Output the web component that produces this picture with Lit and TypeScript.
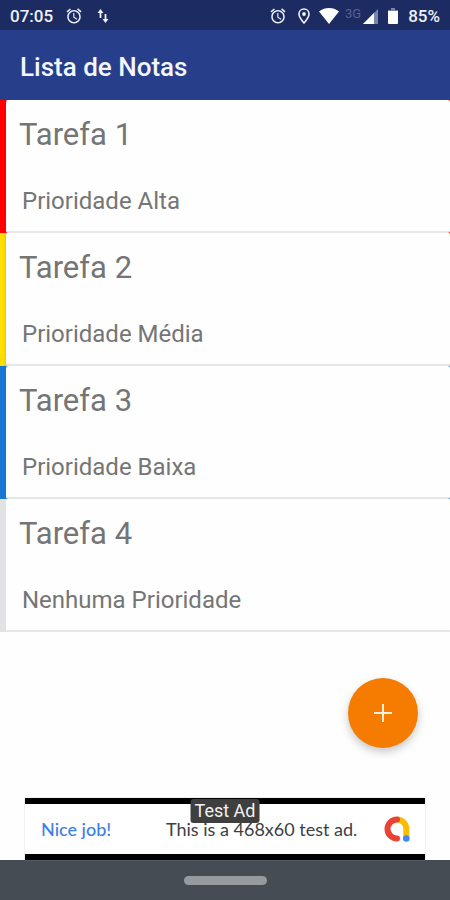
import { LitElement, html, css, svg } from "lit";
import { customElement, property } from "lit/decorators.js";

const alarmIcon = svg`<svg class="icon" width="18" height="18" viewBox="0 0 24 24" fill="currentColor" aria-hidden="true">
  <path d="M22 5.700l-4.600-3.900-1.300 1.500 4.600 3.900L22 5.700zM7.900 3.400L6.600 1.900 2 5.700l1.300 1.500 4.600-3.800zM12.500 8H11v6l4.700 2.900.8-1.200-4-2.400V8zM12 4c-5 0-9 4-9 9s4 9 9 9 9-4 9-9-4-9-9-9zm0 16c-3.900 0-7-3.100-7-7s3.100-7 7-7 7 3.100 7 7-3.100 7-7 7z"/>
</svg>`;

@customElement("status-bar")
export class StatusBar extends LitElement {
  static styles = css`
    :host {
      display: flex;
      align-items: center;
      height: 30px;
      padding: 2px 10px 0;
      box-sizing: border-box;
      background: #1c2b62;
      color: #eef1fa;
      font: 500 17px/20px Roboto, sans-serif;
    }
    .icon { display: block; flex: none; }
    .alarm { margin-left: 12px; }
    .data { margin-left: 14px; }
    .right { display: flex; align-items: center; margin-left: auto; }
    .pin { margin-left: 10px; }
    .wifi { margin-left: 8px; }
    .net {
      align-self: flex-start;
      margin-left: 6px;
      font: 400 13px/16px Roboto, sans-serif;
      color: #55628f;
    }
    .signal { margin-left: 2px; }
    .battery { margin-left: 10px; }
    .level { margin-left: 10px; }
  `;

  render() {
    return html`
      <span>07:05</span>
      <span class="alarm">${alarmIcon}</span>
      <svg class="icon data" width="12" height="16" viewBox="0 0 12 16" aria-hidden="true">
        <path d="M3.500 10V4M8.500 6v6" stroke="currentColor" stroke-width="1.800" fill="none"/>
        <path d="M0.500 5L3.500 1l3 4zM5.500 11l3 4 3-4z" fill="currentColor"/>
      </svg>
      <div class="right">
        ${alarmIcon}
        <svg class="icon pin" width="14" height="18" viewBox="0 0 14 18" aria-hidden="true">
          <path d="M7 2C4 2 2 4.200 2 7c0 3.400 5 9 5 9s5-5.600 5-9c0-2.800-2-5-5-5z" fill="none" stroke="currentColor" stroke-width="1.600"/>
          <circle cx="7" cy="7" r="1.900" fill="currentColor"/>
        </svg>
        <svg class="icon wifi" width="20" height="16" viewBox="0 0 20 16" fill="#fff" aria-hidden="true">
          <path d="M10 16L0 3.500C3 1 6.400 0 10 0s7 1 10 3.500z"/>
        </svg>
        <span class="net">3G</span>
        <svg class="icon signal" width="15" height="15" viewBox="0 0 15 15" aria-hidden="true">
          <path d="M15 0v15H0z" fill="#7a85ab"/>
          <path d="M11 4v11H0z" fill="#fff"/>
        </svg>
        <svg class="icon battery" width="10" height="16" viewBox="0 0 10 16" aria-hidden="true">
          <path d="M3 0h4v2h3v2H0V2h3z" fill="#7a85ab"/>
          <path d="M0 3h10v12a1 1 0 0 1-1 1H1a1 1 0 0 1-1-1z" fill="#fff"/>
        </svg>
        <span class="level">85%</span>
      </div>
    `;
  }
}

@customElement("note-card")
export class NoteCard extends LitElement {
  @property() heading = "";
  @property() priority = "";
  @property({ reflect: true }) level = "none";

  static styles = css`
    :host {
      display: block;
      padding-left: 6px;
      background: #e2e2e4;
    }
    :host([level="high"]) { background: #ff0000; }
    :host([level="medium"]) { background: linear-gradient(to right, #ffdf00 3px, #efcb00 6px); }
    :host([level="low"]) { background: #1976d2; }
    .card {
      box-sizing: border-box;
      min-height: 133px;
      padding: 15px 13px 14px;
      border-bottom: 2px solid #e6e6e6;
      border-radius: 2px;
      background: #fefefe;
      color: #757575;
      font-family: Roboto, sans-serif;
    }
    h2 { margin: 0; font-size: 31px; line-height: 40px; font-weight: 400; }
    p { margin: 30px 0 0 3px; font-size: 24px; line-height: 32px; }
  `;

  render() {
    return html`<article class="card"><h2>${this.heading}</h2><p>${this.priority}</p></article>`;
  }
}

@customElement("ad-banner")
export class AdBanner extends LitElement {
  static styles = css`
    :host {
      position: relative;
      display: flex;
      align-items: center;
      box-sizing: border-box;
      height: 62px;
      margin: 0 25px;
      padding: 0 14px 0 16px;
      border-top: 6px solid #000;
      border-bottom: 6px solid #000;
      background: #fff;
      box-shadow: 0 0 1px #aaa;
      font: 400 18px/24px Lato, sans-serif;
      color: #3c4043;
    }
    a { flex: 1 1 125px; color: #3f7de8; text-decoration: none; font-weight: 500; }
    .copy { flex: 1 1 217px; white-space: nowrap; }
    .logo { display: block; flex: none; }
    .tag {
      position: absolute;
      top: -5px;
      left: 50%;
      transform: translateX(-50%);
      padding: 0 4px;
      border-radius: 3px;
      background: #3f3f3f;
      color: #f2f2f2;
      font: 400 18px/24px Roboto, sans-serif;
      white-space: nowrap;
    }
  `;

  render() {
    return html`
      <a href="#">Nice job!</a>
      <span class="copy">This is a 468x60 test ad.</span>
      <svg class="logo" width="28" height="28" viewBox="0 0 28 28" fill="none" stroke-width="6" aria-hidden="true">
        <path d="M14 4.500a9.300 9.300 0 0 1 9.300 9.500V23" stroke="#fbbc04"/>
        <path d="M14 4.500a9.500 9.500 0 1 0 0 19" stroke="#ea4335" stroke-linecap="round"/>
        <circle cx="23.300" cy="23.500" r="3.300" fill="#4285f4"/>
      </svg>
      <span class="tag">Test Ad</span>
    `;
  }
}

const notes = [
  { heading: "Tarefa 1", priority: "Prioridade Alta", level: "high" },
  { heading: "Tarefa 2", priority: "Prioridade Média", level: "medium" },
  { heading: "Tarefa 3", priority: "Prioridade Baixa", level: "low" },
  { heading: "Tarefa 4", priority: "Nenhuma Prioridade", level: "none" },
];

@customElement("app-root")
export class AppRoot extends LitElement {
  static styles = css`
    :host {
      display: flex;
      flex-direction: column;
      min-height: 100vh;
      background: #fefefe;
      font-family: Roboto, sans-serif;
    }
    header {
      display: flex;
      align-items: center;
      box-sizing: border-box;
      height: 70px;
      padding: 4px 20px 0;
      background: #273e8a;
      color: #f4f6fc;
    }
    h1 { margin: 0; font-size: 26px; line-height: 32px; font-weight: 500; }
    main { position: relative; flex: 1; padding-bottom: 50px; }
    ul { margin: 0; padding: 0; list-style: none; }
    .fab {
      position: absolute;
      right: 32px;
      bottom: 50px;
      display: flex;
      align-items: center;
      justify-content: center;
      width: 70px;
      height: 70px;
      padding: 0;
      border: 0;
      border-radius: 50%;
      background: #f57c00;
      box-shadow: 0 4px 9px rgba(0, 0, 0, 0.22);
    }
    .nav {
      display: flex;
      align-items: center;
      justify-content: center;
      height: 40px;
      background: #454c53;
    }
    .home { width: 83px; height: 9px; padding: 0; border: 0; border-radius: 5px; background: #979b9f; }
  `;

  render() {
    return html`
      <status-bar></status-bar>
      <header><h1>Lista de Notas</h1></header>
      <main>
        <ul>
          ${notes.map((n) => html`<li><note-card .heading=${n.heading} .priority=${n.priority} .level=${n.level}></note-card></li>`)}
        </ul>
        <button class="fab" aria-label="Adicionar nota">
          <svg width="18" height="18" viewBox="0 0 18 18" aria-hidden="true">
            <path d="M9 0v18M0 9h18" stroke="#fff0dd" stroke-width="2"/>
          </svg>
        </button>
      </main>
      <ad-banner></ad-banner>
      <div class="nav"><button class="home" aria-label="Início"></button></div>
    `;
  }
}
